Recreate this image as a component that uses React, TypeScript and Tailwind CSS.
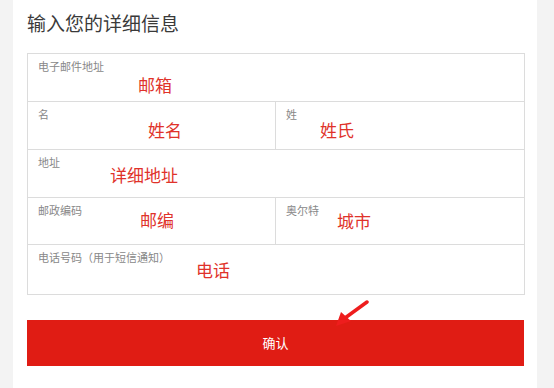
import React from "react";

const font = { fontFamily: '"Microsoft YaHei", "Noto Sans CJK SC", sans-serif' };

function Cell({ label, note, noteLeft, noteTop, className = "" }: { label: string; note: string; noteLeft: string; noteTop: string; className?: string }) {
  return (
    <div className={`flex flex-col px-[10px] pt-[5px] ${className}`}>
      <span className="text-[11px] leading-[14px] text-[#888]">{label}</span>
      <span className={`text-[17px] leading-[22px] text-[#e0322a] ${noteLeft} ${noteTop}`}>{note}</span>
    </div>
  );
}

export default function App() {
  return (
    <div className="flex h-[388px] w-[554px] bg-white" style={font}>
      <div className="w-[13px] bg-[#f3f3f3]" />
      <div className="relative flex flex-1 flex-col bg-white pl-[14px] pr-[12px]">
        <h1 className="pt-[9px] text-[19px] leading-[28px] text-[#3a3a3a]">输入您的详细信息</h1>
        <div className="mt-[16px] flex flex-col border border-[#dcdcdc]">
          <div className="h-[48px] border-b border-[#dcdcdc]">
            <Cell label="电子邮件地址" note="邮箱" noteLeft="ml-[100px]" noteTop="mt-[1px]" />
          </div>
          <div className="flex h-[48px] border-b border-[#dcdcdc]">
            <Cell className="w-[248px] border-r border-[#dcdcdc]" label="名" note="姓名" noteLeft="ml-[110px]" noteTop="mt-[-2px]" />
            <Cell className="flex-1" label="姓" note="姓氏" noteLeft="ml-[34px]" noteTop="mt-[-2px]" />
          </div>
          <div className="h-[48px] border-b border-[#dcdcdc]">
            <Cell label="地址" note="详细地址" noteLeft="ml-[72px]" noteTop="mt-[-5px]" />
          </div>
          <div className="flex h-[47px] border-b border-[#dcdcdc]">
            <Cell className="w-[248px] border-r border-[#dcdcdc]" label="邮政编码" note="邮编" noteLeft="ml-[102px]" noteTop="mt-[-8px]" />
            <Cell className="flex-1" label="奥尔特" note="城市" noteLeft="ml-[51px]" noteTop="mt-[-7px]" />
          </div>
          <div className="h-[49px]">
            <Cell label="电话号码（用于短信通知）" note="电话" noteLeft="ml-[158px]" noteTop="mt-[-5px]" />
          </div>
        </div>
        <button className="mt-[25px] flex h-[46px] w-[497px] items-center justify-center bg-[#e01c14] text-[13px] text-white">
          确认
        </button>
        <svg className="absolute left-[320px] top-[300px]" width="36" height="28" viewBox="0 0 36 28">
          <path d="M34 2 L12 18" stroke="#ee1d1d" strokeWidth="3.5" strokeLinecap="round" />
          <path d="M3 26 L8 12 L18 21 Z" fill="#ee1d1d" />
        </svg>
      </div>
      <div className="w-[17px] bg-[#f3f3f3]" />
    </div>
  );
}
